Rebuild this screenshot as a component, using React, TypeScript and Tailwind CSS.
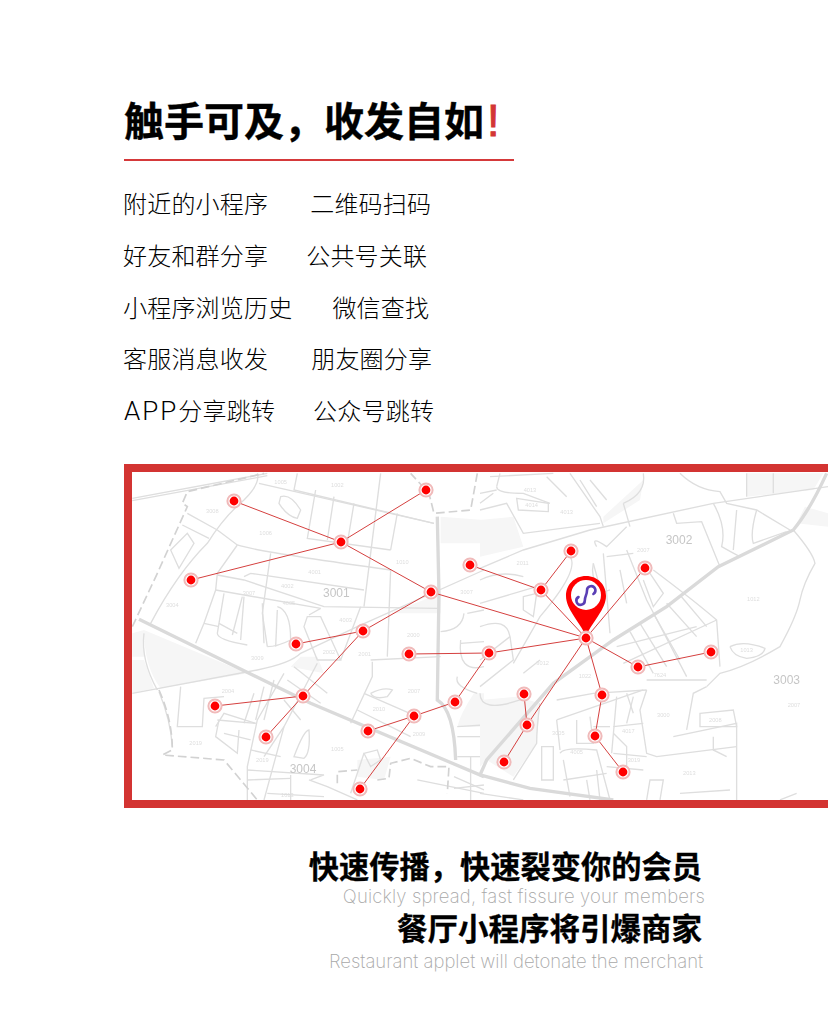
const cjk = "[font-family:'Noto_Sans_CJK_SC','Liberation_Sans',sans-serif]";

const rows = [
  { latin: '', left: '附近的小程序', right: '二维码扫码', gap: 'ml-[42px]' },
  { latin: '', left: '好友和群分享', right: '公共号关联', gap: 'ml-[38px]' },
  { latin: '', left: '小程序浏览历史', right: '微信查找', gap: 'ml-[40px]' },
  { latin: '', left: '客服消息收发', right: '朋友圈分享', gap: 'ml-[43px]' },
  { latin: 'APP', left: '分享跳转', right: '公众号跳转', gap: 'ml-[38px]' },
];

const nodes = [
  [234, 501], [426, 490], [341, 542], [191, 580], [431, 592], [363, 631], [296, 644], [303, 696],
  [215, 706], [266, 737], [409, 654], [489, 653], [455, 702], [414, 716], [368, 731], [360, 789],
  [470, 565], [541, 590], [571, 551], [645, 568], [586, 638], [638, 667], [711, 652], [602, 695],
  [595, 736], [623, 772], [524, 694], [527, 725], [504, 762],
];

// pairs of indexes into nodes
const edges = [
  [0, 2], [1, 2], [3, 2], [2, 4], [4, 5], [5, 6], [5, 7], [7, 8], [7, 9], [4, 20], [10, 11], [11, 20],
  [11, 12], [12, 13], [13, 14], [13, 15], [16, 17], [17, 18], [17, 20], [19, 20], [20, 21], [21, 22],
  [20, 23], [23, 24], [24, 25], [20, 27], [27, 26], [27, 28],
];

// map paths are in 3x crop units, left part starts at (124,460), right part at (480,460)
const leftFills = [
  'M60 510 L370 640 Q200 670 110 685 Q60 620 60 510Z',
  'M25 520 L60 510 L60 590 L25 590Z',
  'M25 600 L60 600 L90 685 L25 700Z',
  'M950 170 L1080 180 L1080 250 L950 250Z',
  'M800 460 L950 400 L950 460Z',
  'M500 620 L530 590 L580 590 L600 640Z',
  'M1050 700 L1080 700 L1080 800 L1000 800 Q1010 760 1050 700Z',
  'M700 900 L800 890 L780 960 L700 950Z',
];

const leftLines = [
  'M400 40 Q410 70 360 120 Q300 170 250 250 Q160 340 80 490',
  'M520 40 L510 90 L930 190', 'M770 40 L720 440', 'M405 70 L930 190',
  'M280 210 L340 255 Q400 275 800 330 L790 590', 'M190 160 L280 210', 'M175 195 L255 235',
  'M140 270 L190 220 L210 250 L165 325Z', 'M575 90 L550 235 L800 270', 'M630 110 L610 240',
  'M690 130 L670 250', 'M820 160 L800 270', 'M470 110 Q500 100 530 150 L520 175 Q490 170 465 130Z',
  'M280 345 L360 360 L600 440 L940 445', 'M340 255 L280 340 L275 390 L240 490 L215 550',
  'M440 280 L415 460 L430 560', 'M360 350 L380 340 L720 390', 'M275 390 L590 445',
  'M300 400 L280 520 Q280 540 370 555', 'M355 410 L325 525', 'M415 430 L420 550', 'M460 440 Q500 450 500 540',
  'M550 470 L590 470 L650 600 L580 600 L540 500Z', 'M60 520 Q50 600 100 690',
  'M170 680 L160 800 L235 800 L240 715 L300 710', 'M105 695 Q140 780 145 860', 'M280 780 L395 790',
  'M480 640 L400 780 L370 920 L370 1020', 'M510 620 L610 700', 'M490 660 L590 730',
  'M580 610 L480 800 L420 1020', 'M380 870 L470 890', 'M370 930 L600 945 L560 960',
  'M510 890 Q540 810 555 810 Q560 880 540 895Z', 'M740 600 L950 590', 'M745 605 L745 650 L680 790',
  'M720 700 L880 770', 'M700 750 L860 830', 'M740 700 Q780 680 805 690 L790 710 Q750 720 740 700',
  'M720 880 L760 870 L770 900 L740 920Z', 'M880 960 L1080 1000', 'M1010 550 L1080 545',
  'M1000 650 Q990 680 1060 700', 'M1010 540 Q1000 640 1080 620', 'M1020 460 Q1015 510 950 515',
  'M1080 450 L1030 460', 'M1000 800 L1080 795', 'M1000 890 L1080 890', 'M990 950 L1080 990',
  'M25 700 L400 630 Q500 610 530 580 L700 500 L1080 330',
  'M25 115 L430 40', 'M25 122 L430 47',
  'M285 490 L340 520', 'M240 490 L285 500', 'M360 410 L350 540', 'M460 450 L455 560',
  'M500 540 Q460 560 430 560', 'M590 445 L555 465', 'M650 600 L710 440',
  'M275 800 L300 760 L395 790', 'M285 780 L275 830 L340 880 L345 810', 'M300 820 L380 840',
  'M390 700 L360 790', 'M420 680 L395 780', 'M450 660 L420 780', 'M480 720 L530 780',
  'M420 890 L480 800', 'M430 1000 L600 1010', 'M500 945 L500 1020', 'M555 960 L610 980 L700 1020',
  'M370 960 L500 955', 'M1000 830 L1080 830', 'M1040 890 L1040 1020', 'M990 985 L1080 975', 'M720 880 L680 1000',
];

const leftDashed = [
  'M25 500 L100 340 L190 140 L175 130 L190 95 L420 40',
  'M105 690 Q145 780 145 870 L115 885 L300 900 L400 1020',
  'M1060 40 L1040 150 L930 160 L915 100 L860 40',
  'M640 970 L640 935 L700 930 M760 960 L795 955 L800 910 L860 895 L920 920 L975 920 L970 1000',
];

const leftRoads = [
  'M45 478 L560 730 L1080 950',
  'M940 170 L945 400 L940 720 Q990 750 995 900',
];

const rightFills = [
  'M370 170 L490 60 L480 120 L370 190Z',
  'M800 40 H1030 L1000 90 L800 110Z',
  'M975 140 L1044 160 V200 L950 190Z',
  'M0 720 L110 710 L180 730 L170 850 L100 950 L20 900 L0 920Z',
  'M0 180 L100 170 L130 260 L0 290Z',
];

const rightLines = [
  'M0 150 L80 130 L130 220 L360 190', 'M50 80 Q50 100 130 100 L210 130', 'M110 115 L205 130 L205 155 L115 150Z',
  'M30 50 L220 40', 'M270 40 L360 170 L370 200', 'M0 100 L50 90', 'M490 40 Q500 100 430 130',
  'M600 40 Q650 90 720 95 L740 130 L830 150 L930 210', 'M800 40 V110', 'M880 40 V100',
  'M580 160 L590 190 L665 185 L720 320', 'M700 130 Q740 200 725 260 Q760 280 780 290', 'M770 150 L760 270',
  'M830 150 Q810 220 820 250 L920 215',
  'M940 210 Q1000 280 1005 310 Q970 370 960 420 Q950 470 900 560 Q800 620 720 640 L680 680',
  'M440 270 L500 420 L620 650', 'M370 280 L390 520', 'M520 330 Q640 420 710 480 L720 620',
  'M450 515 L520 640', 'M480 490 L560 620', 'M520 460 L600 600', 'M560 430 L650 530', 'M600 405 L680 500',
  'M410 560 L650 500', 'M430 610 L710 480', 'M500 660 L680 660',
  'M750 560 Q790 540 855 565 Q850 590 800 595 Q760 590 750 560',
  'M620 810 L640 700 L680 680', 'M580 830 L770 790 L770 1020', 'M660 760 L760 750 L770 800 L660 800Z',
  'M700 830 L700 870 L740 890', 'M500 690 L480 750 L500 880 L530 890 L770 860', 'M230 780 L490 690',
  'M230 720 L340 700 L500 690', 'M180 730 Q170 800 170 850 L100 960', 'M410 710 L395 880', 'M440 700 L460 760',
  'M240 880 Q250 860 350 870 L390 1020', 'M185 860 H220 V960 H185Z', 'M250 900 L270 1010',
  'M500 1020 L510 960 L550 960 L540 1020', 'M400 880 L500 890', 'M380 920 L490 930', 'M900 1020 L950 1000',
  'M600 1000 L750 990', 'M0 360 Q60 330 130 350', 'M130 410 L170 400 L160 470 L130 450Z', 'M0 430 L170 380',
  'M270 290 Q300 330 180 470 L100 610', 'M0 500 Q80 470 90 530 L100 600 L0 680', 'M340 310 L370 420',
  'M120 720 Q0 760 0 700', 'M0 325 L130 270 L330 210 L700 130 L1044 80',
  'M0 600 L90 530', 'M230 780 L240 870', 'M290 780 L290 850 L340 850 L330 770', 'M340 800 L390 800',
  'M400 800 L490 790', 'M460 710 L440 790', 'M400 820 L440 860 L440 950', 'M320 960 L330 1020', 'M350 930 L360 1020',
  'M250 960 L380 940', 'M0 1000 L130 1020', 'M130 640 L180 600', 'M0 130 L40 100', 'M60 40 L50 80',
  'M300 60 L350 140', 'M200 50 L260 110', 'M330 60 L380 120', 'M430 130 L450 200', 'M350 260 Q330 225 380 260 L440 200',
  'M380 290 L460 280', 'M340 310 Q330 350 360 400 L390 390', 'M420 330 L440 430', 'M490 360 L520 440 L550 400 L510 340',
];

const rightRoads = [
  'M1040 40 Q990 150 940 210 L715 320 L560 440 L400 540 L220 670 L20 900 L0 945',
  'M0 945 L150 985 L400 1020',
];

const leftLabels = [
  [470, 72, '1005'], [640, 82, '1002'], [265, 158, '3008'], [425, 226, '1006'], [835, 312, '1010'],
  [572, 342, '4001'], [490, 385, '4002'], [375, 405, '3007'], [495, 434, '4005'], [145, 440, '3004'],
  [665, 485, '4003'], [868, 532, '2000'], [400, 600, '3009'], [722, 588, '2001'], [312, 698, '2004'],
  [870, 698, '2007'], [765, 752, '2010'], [215, 856, '2019'], [885, 828, '2009'], [640, 872, '1005'],
  [415, 906, '2019'], [1028, 402, '3007'], [615, 582, '2002'], [490, 1012, '1013'],
];

const rightLabels = [
  [150, 96, '4013'], [155, 140, '4014'], [260, 162, '4013'], [128, 316, '2011'], [490, 276, '2007'],
  [820, 424, '1012'], [188, 614, '3012'], [315, 654, '1022'], [942, 742, '2007'], [550, 772, '3000'],
  [235, 824, '3005'], [706, 786, '2008'], [445, 818, '4017'], [628, 946, '2013'], [800, 576, '1013'],
  [290, 882, '4005'], [462, 906, '3019'], [540, 650, '7624'],
];

const mapFont = "[font-family:'Liberation_Sans',sans-serif]";

function MapArt() {
  return (
    <svg viewBox="132 472 696 328" className="block h-[328px] w-full" fill="none">
      <g transform="translate(124 460) scale(0.3333)" className="blur-[0.4px]">
        {leftFills.map((d) => <path key={d} d={d} fill="#f6f6f6" />)}
        {leftLines.map((d) => <path key={d} d={d} stroke="#dedede" strokeWidth="4" />)}
        {leftDashed.map((d) => <path key={d} d={d} stroke="#d2d2d2" strokeWidth="5" strokeDasharray="26 12" />)}
        {leftRoads.map((d) => <path key={d} d={d} stroke="#dadada" strokeWidth="10" />)}
        {leftLabels.map(([x, y, t]) => (
          <text key={`${x}-${y}`} x={x} y={y} textAnchor="middle" fontSize="17" fill="#dedede" className={mapFont}>{t}</text>
        ))}
        <text x="637" y="411" textAnchor="middle" fontSize="36" fill="#c6c6c6" className={mapFont}>3001</text>
        <text x="537" y="938" textAnchor="middle" fontSize="36" fill="#c6c6c6" className={mapFont}>3004</text>
      </g>
      <g transform="translate(480 460) scale(0.3333)" className="blur-[0.4px]">
        {rightFills.map((d) => <path key={d} d={d} fill="#f6f6f6" />)}
        {rightLines.map((d) => <path key={d} d={d} stroke="#dedede" strokeWidth="4" />)}
        {rightRoads.map((d) => <path key={d} d={d} stroke="#dadada" strokeWidth="10" />)}
        {rightLabels.map(([x, y, t]) => (
          <text key={`${x}-${y}`} x={x} y={y} textAnchor="middle" fontSize="17" fill="#dedede" className={mapFont}>{t}</text>
        ))}
        <text x="597" y="251" textAnchor="middle" fontSize="36" fill="#c6c6c6" className={mapFont}>3002</text>
        <text x="920" y="671" textAnchor="middle" fontSize="36" fill="#c6c6c6" className={mapFont}>3003</text>
      </g>

      {edges.map(([a, b]) => (
        <line key={`${a}-${b}`} x1={nodes[a][0]} y1={nodes[a][1]} x2={nodes[b][0]} y2={nodes[b][1]} stroke="#d5403f" strokeWidth="1" />
      ))}

      <path d="M586 576 C574 576 566 585 566 596 C566 609 579 621 586 636 C593 621 606 609 606 596 C606 585 598 576 586 576Z" fill="#ff0000" />
      <circle cx="586" cy="595" r="15" fill="#fff" />
      <path d="M578.5 597 A4.2 4.2 0 1 0 584.8 600.6 C584.8 596 587 595 587 590.6 A4.2 4.2 0 1 1 593.4 594" stroke="#5a3fb5" strokeWidth="2.6" strokeLinecap="round" />

      {nodes.map(([x, y]) => (
        <g key={`${x}-${y}`}>
          <circle cx={x} cy={y} r="6.6" fill="#fff" stroke="#f0baba" strokeWidth="2" />
          <circle cx={x} cy={y} r="4.4" fill="#ff0000" />
        </g>
      ))}
    </svg>
  );
}

export default function App() {
  return (
    <div className={`h-[1016px] w-[828px] overflow-hidden bg-white ${cjk}`}>
      <section className="pt-[92px] pl-[124px]">
        <div className="w-[390px] border-b-2 border-[#d5393a] pb-[13px]">
          <h1 className="text-[40px] leading-[54px] font-bold whitespace-nowrap text-black [-webkit-text-stroke:0.4px_black]">
            触手可及，收发自如<span className="ml-[3px] text-[45px] leading-[0] font-normal text-[#d33634] [-webkit-text-stroke:1px_#d33634] [font-family:'Liberation_Sans',sans-serif]">!</span>
          </h1>
        </div>
        <ul className="mt-[24px] flex flex-col gap-[15.75px] text-[24px] leading-[36px] font-light tracking-[0.2px] text-black">
          {rows.map((row) => (
            <li key={row.left} className="flex whitespace-nowrap">
              <span className="-ml-px">
                {row.latin && <span className="ml-px text-[26px] leading-[0] font-light tracking-[2px] [font-family:Roboto,sans-serif]">{row.latin}</span>}
                {row.left}
              </span>
              <span className={row.gap}>{row.right}</span>
            </li>
          ))}
        </ul>
      </section>

      <div className="mt-[36px] ml-[124px] border-y-8 border-l-8 border-[#d33432] bg-white">
        <MapArt />
      </div>

      <section className="mt-[37px] flex flex-col items-end pr-[124px] text-right whitespace-nowrap">
        <h2 className="mr-[2px] text-[30.25px] leading-[40px] font-bold text-black [-webkit-text-stroke:0.3px_black]">快速传播，快速裂变你的会员</h2>
        <p className="mt-[1px] -mr-[1px] text-[18.5px] leading-[20px] font-extralight tracking-[0.15px] text-[#a8a8a8] [font-family:Inter,sans-serif]">Quickly spread, fast fissure your members</p>
        <h2 className="mt-[1px] mr-[2px] text-[30.5px] leading-[40px] font-bold text-black [-webkit-text-stroke:0.3px_black]">餐厅小程序将引爆商家</h2>
        <p className="mt-[3px] mr-[1px] text-[18.5px] leading-[22px] font-extralight text-[#a8a8a8] [font-family:Inter,sans-serif]">Restaurant applet will detonate the merchant</p>
      </section>
    </div>
  );
}
